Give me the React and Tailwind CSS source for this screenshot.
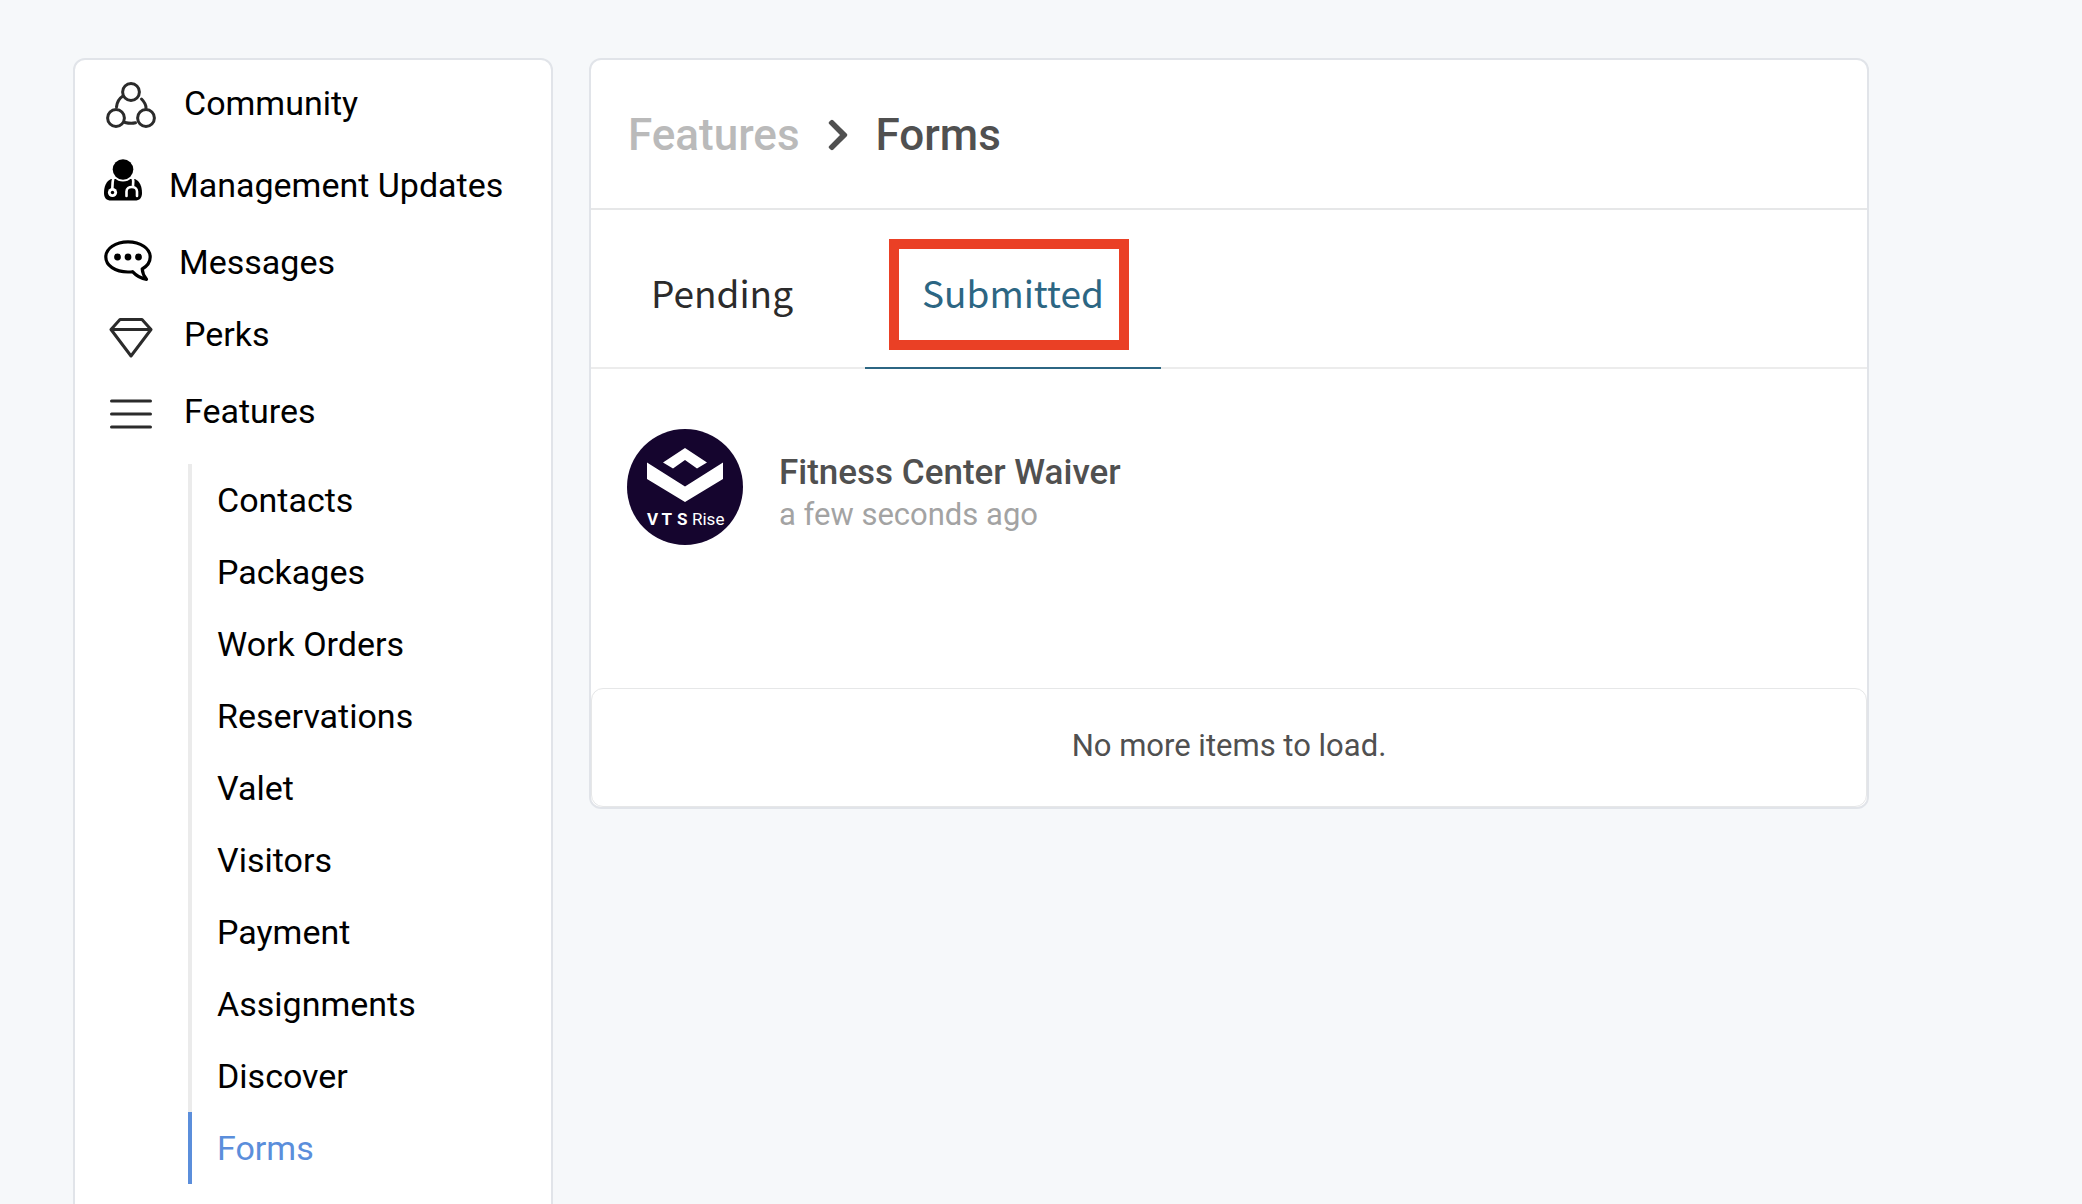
import React, { useState } from "react";
import { FaChevronRight } from "react-icons/fa";

function CommunityIcon() {
  return (
    <svg width="53" height="54" viewBox="0 -6 53 54" fill="none" stroke="#2b2b2b" strokeWidth="3" strokeLinecap="round">
      <circle cx="27" cy="10" r="8.4" />
      <circle cx="12" cy="36" r="8.4" />
      <circle cx="42" cy="36" r="8.4" />
      <path d="M19 14c-4 2.500-6 6-6.500 11" />
      <path d="M37.500 17c3 3 4.500 6 4.500 9" />
      <path d="M21 40.500c4 1 8 1 10.500.300" />
    </svg>
  );
}

function ManagementIcon() {
  return (
    <svg width="38" height="52" viewBox="0 0 38 52">
      <path d="M7 20C2.500 22 0 27 0 34c0 5 2.500 7.500 7 7.500h24c4.500 0 7-2.500 7-7.500 0-7-2.500-12-7-14z" />
      <circle cx="19" cy="10.500" r="12" fill="#fff" />
      <circle cx="19" cy="10.500" r="10.300" />
      <g fill="none" stroke="#fff" strokeWidth="2.600">
        <path d="M9.500 18C8.500 22 8.300 25 8.300 30" />
        <path d="M28.500 18c1 3 1.200 5 .5 9" />
        <path d="M22.500 37v-4.500c0-6 10.500-6 10.500 0V37" strokeLinecap="round" />
      </g>
      <circle cx="8.500" cy="33.500" r="4.600" fill="#fff" />
      <circle cx="8.500" cy="33.500" r="1.700" />
    </svg>
  );
}

function MessagesIcon() {
  return (
    <svg width="48" height="44" viewBox="0 0 48 44">
      <path
        d="M24 1.800C11.500 1.800 1.800 8.500 1.800 17S11 32 24 32c1.700 0 3 0 4.500-.300 4 4.300 8.500 7 14 7.600-2.500-3-4-6-4.300-10.300C43.500 26 46.200 21.800 46.200 17 46.200 8.500 36.500 1.800 24 1.800z"
        fill="none"
        stroke="#000"
        strokeWidth="3.200"
        strokeLinejoin="round"
      />
      <circle cx="13.500" cy="17" r="3.400" />
      <circle cx="24" cy="17" r="3.400" />
      <circle cx="34.500" cy="17" r="3.400" />
    </svg>
  );
}

function PerksIcon() {
  return (
    <svg width="53" height="48" viewBox="0 -8 53 48" fill="none" stroke="#2b2b2b" strokeWidth="3" strokeLinejoin="round">
      <path d="M16 1.500h22l9 10L27 38 7 11.500zM7 11.500h40" />
    </svg>
  );
}

function FeaturesIcon() {
  return (
    <svg width="53" height="36" viewBox="0 -6 53 36" stroke="#2b2b2b" strokeWidth="3" strokeLinecap="round">
      <path d="M7.500 2h39M7.500 15h39M7.500 28h39" />
    </svg>
  );
}

function RiseLogo() {
  return (
    <svg className="size-[116px] shrink-0 rounded-full bg-[#15052e]" viewBox="0 0 116 116" fill="#fff">
      <path d="M58 19l22 14.500-10 6L58 31l-12 8.500-10-6z" />
      <path d="M20 33.500L58 57.500l38-24V50L58 73 20 50z" />
      <text x="20 34.500 50" y="96" fontSize="17" fontWeight="700">VTS</text>
      <text x="65" y="96" fontSize="17">Rise</text>
    </svg>
  );
}

const navItems = [
  { name: "Community", icon: CommunityIcon, row: "h-[82px]" },
  { name: "Management Updates", icon: ManagementIcon, row: "h-[82px]" },
  { name: "Messages", icon: MessagesIcon, row: "h-[72px]" },
  { name: "Perks", icon: PerksIcon, row: "h-[72px]" },
  { name: "Features", icon: FeaturesIcon, row: "h-[82px]" },
];

const features = [
  "Contacts",
  "Packages",
  "Work Orders",
  "Reservations",
  "Valet",
  "Visitors",
  "Payment",
  "Assignments",
  "Discover",
  "Forms",
];

function Sidebar() {
  return (
    <nav className="w-[480px] shrink-0 rounded-xl border-2 border-[#e1e4e9] bg-white pt-0.5 pb-14 text-[34px] leading-10 text-black">
      <ul>
        {navItems.map(({ name, icon: Icon, row }) => (
          <li key={name}>
            <a href="#" className={`flex items-center gap-[27px] pl-[29px] ${row}`}>
              <Icon />
              {name}
            </a>
          </li>
        ))}
      </ul>
      <ul className="mt-3 ml-[113px]">
        {features.map((name) => (
          <li key={name}>
            <a
              href="#"
              className={`flex h-[72px] items-center border-l-4 pl-[25px] ${
                name === "Forms" ? "border-[#5b8edb] text-[#5b8edb]" : "border-[#ebebeb]"
              }`}
            >
              {name}
            </a>
          </li>
        ))}
      </ul>
    </nav>
  );
}

function FormsPanel() {
  const [tab, setTab] = useState("Submitted");

  return (
    <main className="min-w-0 flex-1 rounded-xl border-2 border-[#e1e4e9] bg-white">
      <h1 className="flex h-[150px] items-center border-b-2 border-[#e6e7e8] pt-0.5 pl-[37px] text-[44px] leading-[48px] font-medium text-[#505050]">
        <a href="#" className="text-[#bababa]">Features</a>
        <FaChevronRight className="mx-5 size-9" />
        Forms
      </h1>

      <div role="tablist" className="flex h-[159px] gap-[15px] border-b-2 border-[#ececec] pl-[3px] font-['Noto_Sans_CJK_SC',sans-serif] text-[37px]">
        {["Pending", "Submitted"].map((name) => (
          <button
            key={name}
            role="tab"
            aria-selected={tab === name}
            onClick={() => setTab(name)}
            className={`relative -mb-0.5 border-b-2 px-[57px] pt-2 ${
              tab === name ? "border-[#2c6683] text-[#2c6683]" : "border-transparent text-[#2b2b2b]"
            }`}
          >
            {name}
            {name === "Submitted" && (
              <span className="pointer-events-none absolute top-[29px] right-8 left-6 h-[111px] border-10 border-[#ea4025]" />
            )}
          </button>
        ))}
      </div>

      <div className="flex h-[319px] items-start gap-9 px-9 pt-[60px]">
        <RiseLogo />
        <div className="pt-6">
          <h2 className="text-[35px] leading-10 font-medium text-[#505050]">Fitness Center Waiver</h2>
          <p className="mt-0.5 text-[31px] leading-10 text-[#a3a3a3]">a few seconds ago</p>
        </div>
      </div>

      <p className="flex h-[119px] items-center justify-center rounded-xl border border-[#e6e7e8] pb-0.5 text-[31px] text-[#505050]">
        No more items to load.
      </p>
    </main>
  );
}

export default function App() {
  return (
    <div className="min-h-screen bg-[#f6f8fa] font-[Roboto,sans-serif]">
      <div className="flex items-start gap-9 pt-[58px] pr-[213px] pl-[73px]">
        <Sidebar />
        <FormsPanel />
      </div>
    </div>
  );
}
